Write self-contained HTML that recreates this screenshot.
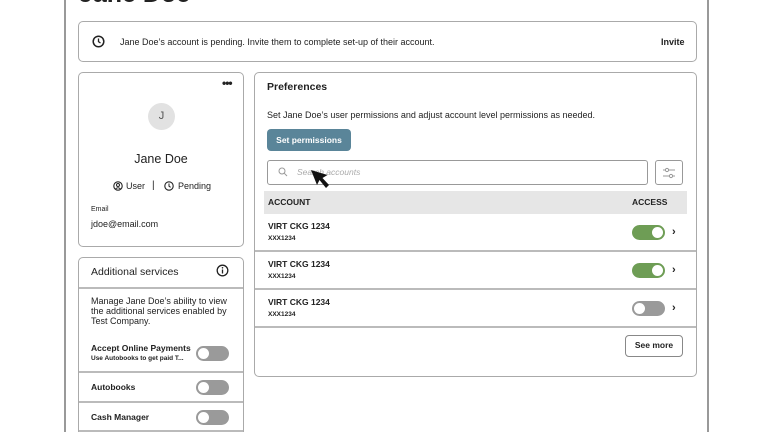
<!DOCTYPE html>
<html style="width:768px;height:432px;overflow:hidden"><head><meta charset="utf-8"><style>
*{box-sizing:border-box;margin:0;padding:0}
body{width:768px;height:432px;overflow:hidden;background:#fff;font-family:"Liberation Sans",sans-serif;color:#222;position:relative}
.a{position:absolute}
.card{position:absolute;border:1.5px solid #aaa;border-radius:5px;background:#fff}
.tg{position:absolute;width:33px;height:15px;border-radius:8px;background:#9a9a9a}
.tg::after{content:"";position:absolute;top:2px;left:2px;width:11px;height:11px;border-radius:50%;background:#fff}
.tg.on{background:#6e9d55}
.tg.on::after{left:20px}
.hr{position:absolute;height:1.5px;background:#bbb}
</style></head><body>
<div class="a" style="left:64px;top:0;width:2px;height:432px;background:#999"></div>
<div class="a" style="left:707px;top:0;width:2px;height:432px;background:#999"></div>
<div class="a" style="left:79px;top:-20px;font-size:25px;font-weight:bold">Jane Doe</div>

<div class="card" style="left:78px;top:21px;width:619px;height:41px"></div>
<svg class="a" style="left:92px;top:35px" width="13" height="13" viewBox="0 0 13 13"><circle cx="6.5" cy="6.5" r="5.3" fill="none" stroke="#222" stroke-width="1.5"/><path d="M6.5 3.5V6.7L8.5 8" fill="none" stroke="#222" stroke-width="1.3"/></svg>
<div class="a" style="left:120px;top:37px;font-size:9px">Jane Doe’s account is pending. Invite them to complete set-up of their account.</div>
<div class="a" style="left:661px;top:37px;font-size:9px;font-weight:bold">Invite</div>

<div class="card" style="left:78px;top:72px;width:166px;height:175px"></div>
<div class="a" style="left:222px;top:76px;font-size:12px;font-weight:bold;letter-spacing:-1px">•••</div>
<div class="a" style="left:148px;top:103px;width:27px;height:27px;border-radius:50%;background:#e2e2e2;font-size:11px;color:#555;text-align:center;line-height:27px">J</div>
<div class="a" style="left:78px;top:152px;width:166px;text-align:center;font-size:12.5px">Jane Doe</div>
<svg class="a" style="left:113px;top:181px" width="10" height="10" viewBox="0 0 10 10"><circle cx="5" cy="5" r="4.2" fill="none" stroke="#222" stroke-width="1.1"/><circle cx="5" cy="4" r="1.5" fill="none" stroke="#222" stroke-width="1"/><path d="M2.5 8Q5 5.5 7.5 8" fill="none" stroke="#222"/></svg>
<div class="a" style="left:126px;top:181px;font-size:9px">User</div>
<div class="a" style="left:152px;top:180px;font-size:10px">|</div>
<svg class="a" style="left:164px;top:181px" width="10" height="10" viewBox="0 0 10 10"><circle cx="5" cy="5" r="4.2" fill="none" stroke="#222" stroke-width="1.1"/><path d="M5 2.5V5.2L6.6 6.3" fill="none" stroke="#222"/></svg>
<div class="a" style="left:178px;top:181px;font-size:9px">Pending</div>
<div class="a" style="left:91px;top:206px;font-size:7px">Email</div>
<div class="a" style="left:91px;top:219px;font-size:9px">jdoe@email.com</div>

<div class="card" style="left:78px;top:257px;width:166px;height:185px"></div>
<div class="a" style="left:91px;top:266px;font-size:10.5px">Additional services</div>
<svg class="a" style="left:216px;top:264px" width="13" height="13" viewBox="0 0 13 13"><circle cx="6.5" cy="6.5" r="5.3" fill="none" stroke="#222" stroke-width="1.3"/><path d="M6.5 5.5V9.5" stroke="#222" stroke-width="1.3"/><circle cx="6.5" cy="3.8" r=".8" fill="#222"/></svg>
<div class="hr" style="left:79px;top:287px;width:164px"></div>
<div class="a" style="left:91px;top:296px;width:145px;font-size:9px;line-height:10px">Manage Jane Doe’s ability to view the additional services enabled by Test Company.</div>
<div class="a" style="left:91px;top:343px;font-size:8.5px;font-weight:bold">Accept Online Payments</div>
<div class="a" style="left:91px;top:355px;font-size:6.5px;font-weight:bold">Use Autobooks to get paid T...</div>
<div class="tg" style="left:196px;top:346px"></div>
<div class="hr" style="left:79px;top:371px;width:164px"></div>
<div class="a" style="left:91px;top:382px;font-size:8.5px;font-weight:bold">Autobooks</div>
<div class="tg" style="left:196px;top:380px"></div>
<div class="hr" style="left:79px;top:401px;width:164px"></div>
<div class="a" style="left:91px;top:412px;font-size:8.5px;font-weight:bold">Cash Manager</div>
<div class="tg" style="left:196px;top:410px"></div>
<div class="hr" style="left:79px;top:430px;width:164px"></div>

<div class="card" style="left:254px;top:72px;width:443px;height:305px"></div>
<div class="a" style="left:267px;top:81px;font-size:10.5px;font-weight:bold">Preferences</div>
<div class="a" style="left:267px;top:110px;font-size:9px">Set Jane Doe’s user permissions and adjust account level permissions as needed.</div>
<div class="a" style="left:267px;top:129px;width:84px;height:22px;border-radius:4px;background:#5a8599;color:#fff;font-size:8.5px;font-weight:bold;text-align:center;line-height:22px">Set permissions</div>
<div class="a" style="left:267px;top:160px;width:381px;height:25px;border:1.5px solid #999;border-radius:3px"></div>
<svg class="a" style="left:278px;top:167px" width="10" height="10" viewBox="0 0 10 10"><circle cx="4" cy="4" r="3" fill="none" stroke="#999"/><path d="M6.2 6.2L9 9" stroke="#999"/></svg>
<div class="a" style="left:297px;top:167px;font-size:8.5px;font-style:italic;color:#aaa">Search accounts</div>
<svg class="a" style="left:309px;top:168px" width="26" height="26" viewBox="0 0 26 26"><path d="M2 2L8 17L10.5 12L17 20L20 17L13.5 10L18.5 7Z" fill="#111"/></svg>
<div class="a" style="left:655px;top:160px;width:28px;height:25px;border:1.5px solid #999;border-radius:3px"></div>
<svg class="a" style="left:662px;top:166px" width="14" height="14" viewBox="0 0 14 14"><path d="M1 4H13M1 10H13" stroke="#999" stroke-width=".9"/><circle cx="5" cy="4" r="1.6" fill="#fff" stroke="#999"/><circle cx="9" cy="10" r="1.6" fill="#fff" stroke="#999"/></svg>
<div class="a" style="left:264px;top:191px;width:423px;height:23px;background:#e6e6e6"></div>
<div class="a" style="left:268px;top:197px;font-size:8.5px;font-weight:bold">ACCOUNT</div>
<div class="a" style="left:632px;top:197px;font-size:8.5px;font-weight:bold">ACCESS</div>

<div class="a" style="left:268px;top:221px;font-size:8.5px;font-weight:bold">VIRT CKG 1234</div>
<div class="a" style="left:268px;top:235px;font-size:6.5px;font-weight:bold">XXX1234</div>
<div class="tg on" style="left:632px;top:225px"></div>
<div class="a" style="left:672px;top:226px;font-size:11px;font-weight:bold">›</div>
<div class="hr" style="left:255px;top:250px;width:441px"></div>
<div class="a" style="left:268px;top:259px;font-size:8.5px;font-weight:bold">VIRT CKG 1234</div>
<div class="a" style="left:268px;top:273px;font-size:6.5px;font-weight:bold">XXX1234</div>
<div class="tg on" style="left:632px;top:263px"></div>
<div class="a" style="left:672px;top:264px;font-size:11px;font-weight:bold">›</div>
<div class="hr" style="left:255px;top:288px;width:441px"></div>
<div class="a" style="left:268px;top:297px;font-size:8.5px;font-weight:bold">VIRT CKG 1234</div>
<div class="a" style="left:268px;top:311px;font-size:6.5px;font-weight:bold">XXX1234</div>
<div class="tg" style="left:632px;top:301px"></div>
<div class="a" style="left:672px;top:302px;font-size:11px;font-weight:bold">›</div>
<div class="hr" style="left:255px;top:326px;width:441px"></div>
<div class="a" style="left:625px;top:335px;width:58px;height:22px;border:1.5px solid #888;border-radius:4px;font-size:8.5px;font-weight:bold;text-align:center;line-height:19px">See more</div>
</body></html>
